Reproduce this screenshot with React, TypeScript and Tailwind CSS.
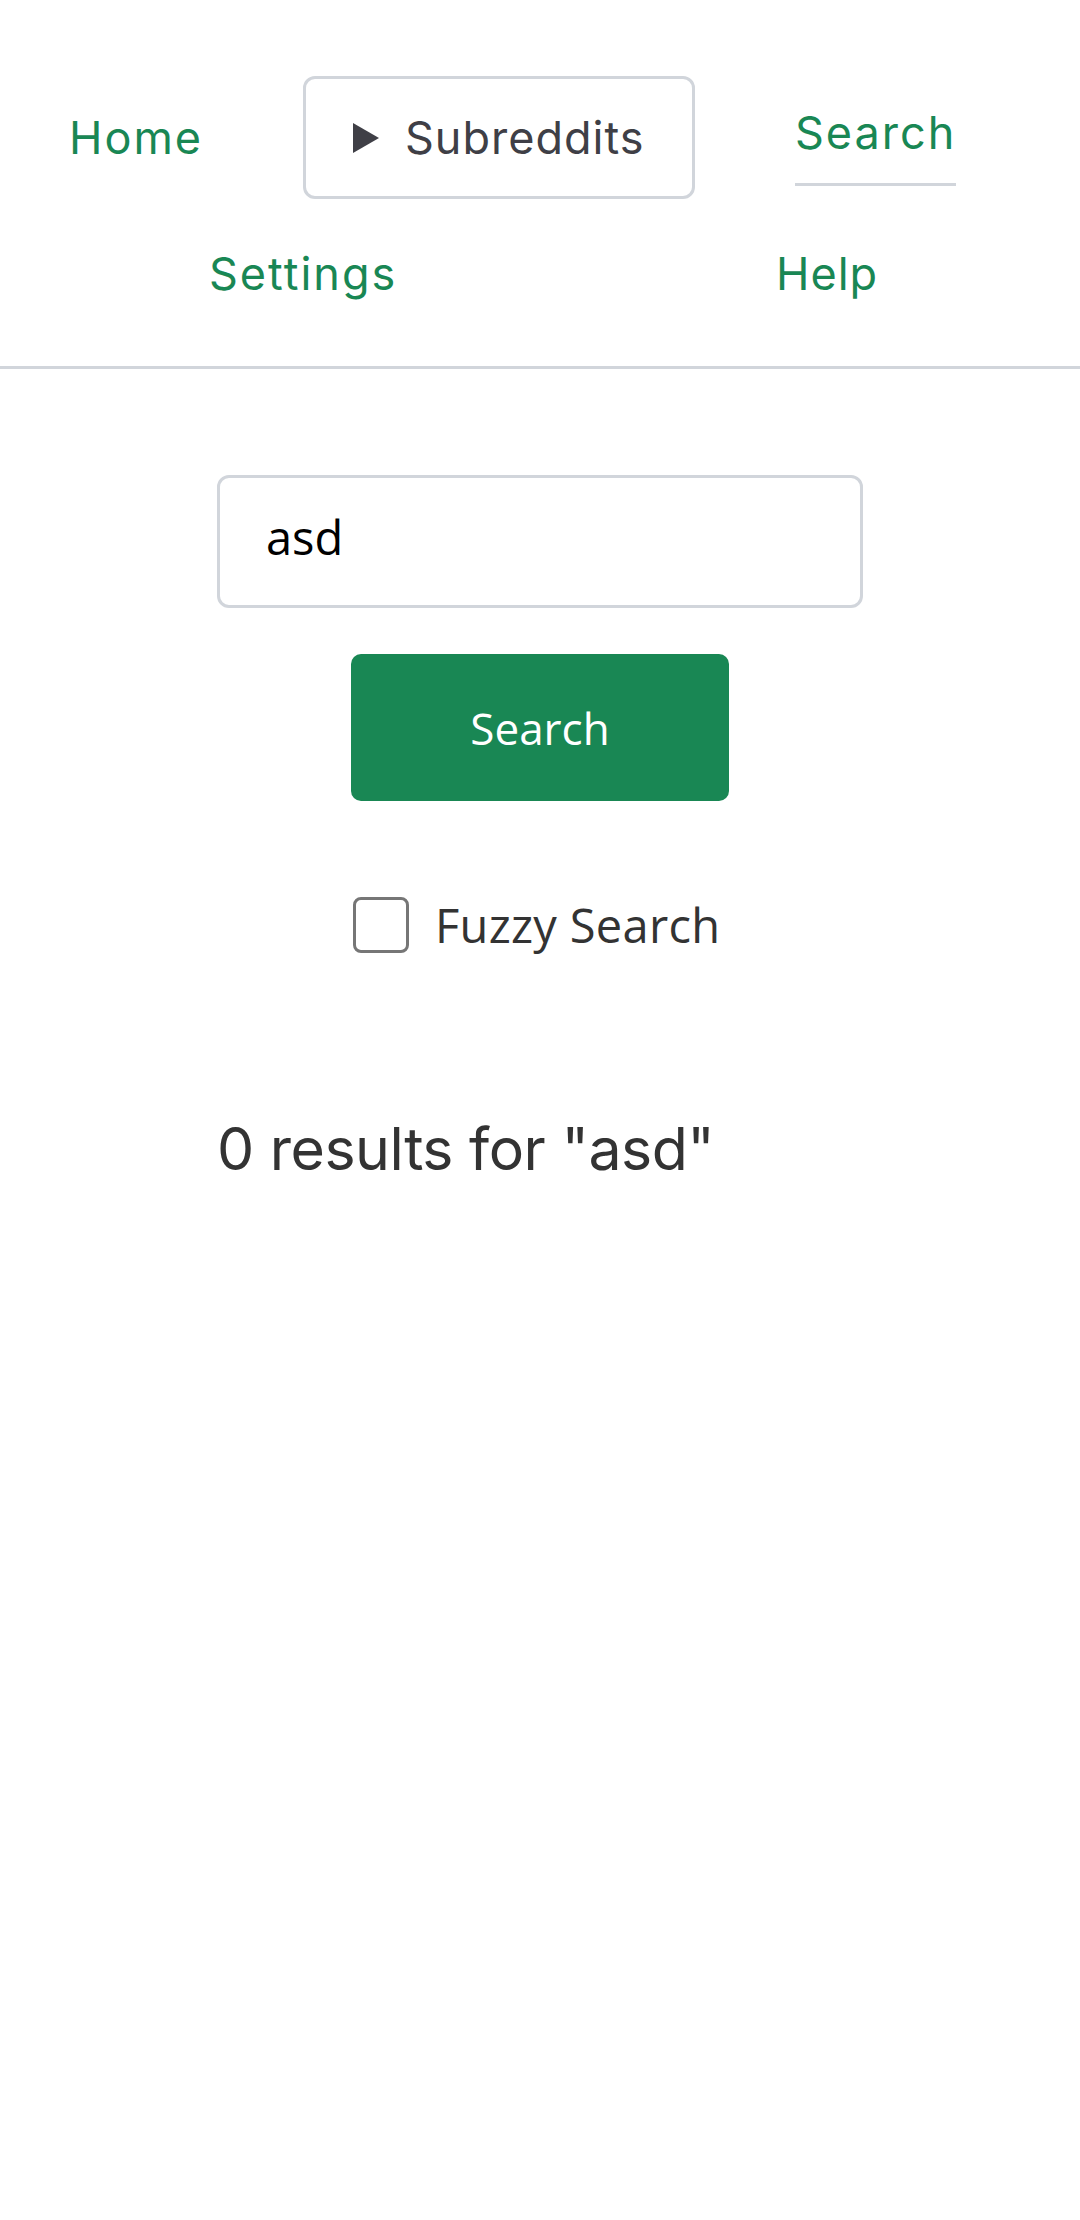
import { useState } from "react";

const NAV_FONT = { fontFamily: "Inter, 'Noto Sans', sans-serif" };

function NavBar() {
  return (
    <nav
      className="border-b-[3px] border-[#d1d5db] pt-[76px] pb-[70px] text-[45px] leading-[45px] tracking-[2px]"
      style={NAV_FONT}
    >
      <div className="flex items-center pl-[69px]">
        <a className="w-[234px] text-[#198754]">Home</a>
        <div className="flex h-[123px] w-[392px] items-center gap-[26px] rounded-[12px] border-[3px] border-[#d1d5db] pl-[47px] text-[#3f3f46]">
          <svg width="26" height="30" viewBox="0 0 26 30" className="shrink-0">
            <path d="M0 0 L26 15 L0 30 Z" fill="#3f3f46" />
          </svg>
          <span className="tracking-[1px]">Subreddits</span>
        </div>
        <a className="ml-[100px] inline-flex flex-col self-start pt-[34px] text-[#198754]">
          <span>Search</span>
          <span className="mt-[28px] h-[3px] w-full bg-[#d1d5db]" />
        </a>
      </div>
      <div className="mt-[52px] flex pl-[209px]">
        <a className="w-[567px] text-[#198754]">Settings</a>
        <a className="text-[#198754] tracking-[1px]">Help</a>
      </div>
    </nav>
  );
}

export default function App() {
  const [query, setQuery] = useState("asd");
  const [fuzzy, setFuzzy] = useState(false);

  return (
    <div className="min-h-[2220px] bg-white">
      <NavBar />
      <main
        className="mx-auto flex w-[646px] flex-col pt-[106px]"
        style={{ fontFamily: "'Open Sans', 'Noto Sans', sans-serif" }}
      >
        <input
          value={query}
          onChange={(e) => setQuery(e.target.value)}
          className="h-[133px] w-full rounded-[12px] border-[3px] border-[#d1d5db] pt-[20px] pb-[30px] pl-[46px] text-[47px] text-black outline-none"
        />
        <button className="mx-auto mt-[46px] h-[147px] w-[378px] rounded-[10px] bg-[#198754] text-[44px] text-white">
          Search
        </button>
        <label className="mt-[96px] ml-[136px] flex h-[56px] items-center gap-[26px] text-[47px] leading-none text-[#333]">
          <input
            type="checkbox"
            checked={fuzzy}
            onChange={(e) => setFuzzy(e.target.checked)}
            className="h-[56px] w-[56px] shrink-0 appearance-none rounded-[8px] border-[3px] border-[#767676] bg-white"
          />
          <span className="tracking-[0.3px]">Fuzzy Search</span>
        </label>
        <h2
          className="mt-[166px] text-[59px] leading-none tracking-[-0.5px] text-[#333]"
          style={NAV_FONT}
        >
          0 results for "{query}"
        </h2>
      </main>
    </div>
  );
}
